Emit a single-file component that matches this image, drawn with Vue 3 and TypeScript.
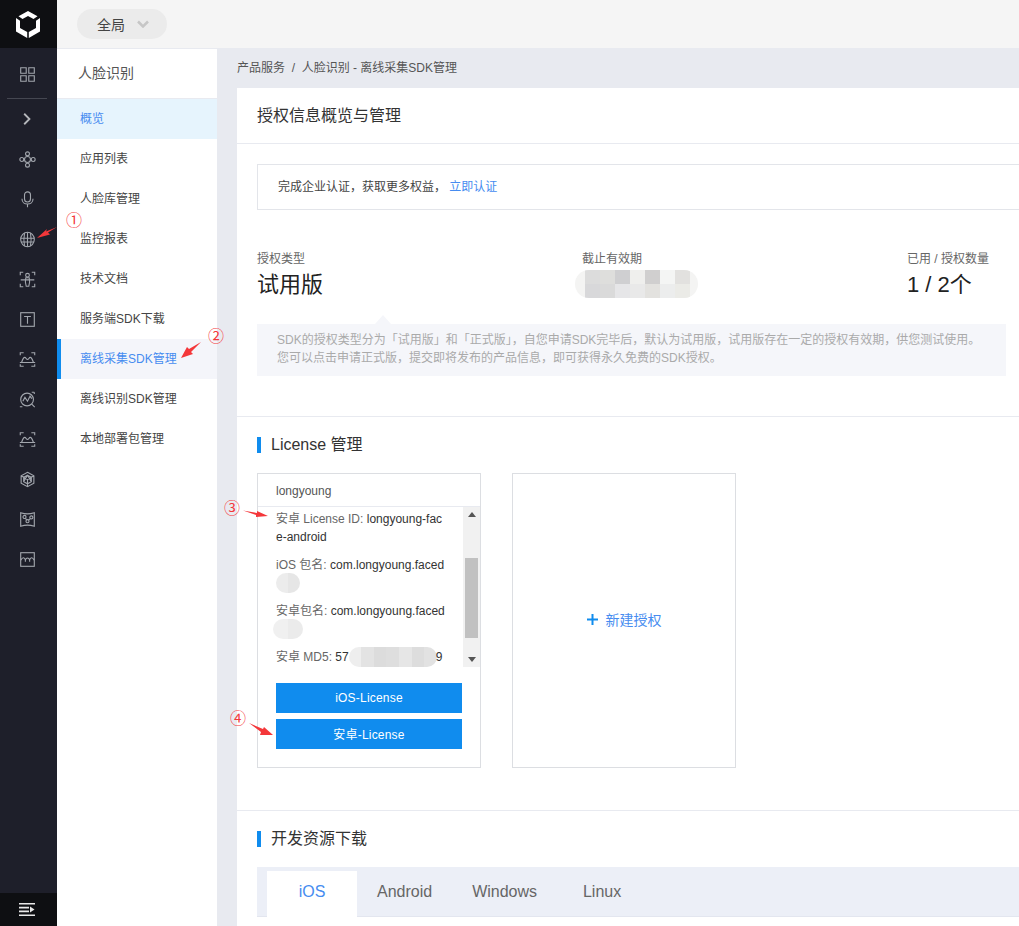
<script setup lang="ts">
const menu = ['概览', '应用列表', '人脸库管理', '监控报表', '技术文档', '服务端SDK下载', '离线采集SDK管理', '离线识别SDK管理', '本地部署包管理']
const tabs = ['iOS', 'Android', 'Windows', 'Linux']

const dateBlur = ['#dcdcdc', '#dededc', '#cfcfd1', '#efefed', '#d0cfcf', '#f4f5f4', '#e2e1df', '#d8d8da', '#dadada', '#e6e6e8', '#e9e9e9', '#e3e2df', '#eceded', '#ebebe7']
const md5Blur = ['#eeeeee', '#e3e3e3', '#dcdcdc', '#dedede', '#e6e6e6', '#dddddd', '#e2e2e2']
</script>

<template>
  <div class="page">
    <aside class="rail">
      <div class="logo">
        <svg width="24" height="27" viewBox="0 0 24 27">
          <path d="M12 0 21.500 5.200 17.500 8 12 5 6.500 8 2.500 5.200z" fill="#fff" />
          <path d="M0 7 4 9.800V17L11.200 21V27L0 20.500z" fill="#fff" />
          <path d="M24 7 20 9.800V17L12.800 21V27L24 20.500z" fill="#fff" />
        </svg>
      </div>
      <div class="rail-list">
        <span class="rail-icon">
          <svg viewBox="0 0 20 20"><path d="M2 2h6.500v6.500H2zM11.500 2H18v6.500h-6.500zM2 11.500h6.500V18H2zM11.500 11.500H18V18h-6.500z" /></svg>
        </span>
        <div class="rail-line"></div>
        <span class="rail-icon chevron">
          <svg viewBox="0 0 20 20"><path d="M6 2.500 13.500 10 6 17.500" /></svg>
        </span>
        <span class="rail-icon">
          <svg viewBox="0 0 20 20"><circle cx="10" cy="10" r="3.500" /><circle cx="10" cy="3.300" r="2.300" /><circle cx="10" cy="16.700" r="2.300" /><circle cx="3.300" cy="10" r="2.300" /><circle cx="16.700" cy="10" r="2.300" /></svg>
        </span>
        <span class="rail-icon">
          <svg viewBox="0 0 20 20"><rect x="6.500" y="1" width="7" height="12" rx="3.500" /><path d="M3.500 9c0 8.500 13 8.500 13 0M10 15.500V19" /></svg>
        </span>
        <span class="rail-icon">
          <svg viewBox="0 0 20 20"><ellipse cx="10" cy="10" rx="8" ry="8.500" /><path d="M2 8.500h16M2.500 13h15M10 1.500v17M6.500 2.500c-1 5-1 10 0 15M13.500 2.500c1 5 1 10 0 15" /></svg>
        </span>
        <span class="rail-icon">
          <svg viewBox="0 0 20 20"><path d="M1.500 5V1.500H5M15 1.500h3.500V5M1.500 15v3.500H5M15 18.500h3.500V15" /><circle cx="10" cy="5" r="2.200" /><path d="M8 8h4l.5 5-1 5h-3l-1-5zM2 10.500h16" /></svg>
        </span>
        <span class="rail-icon">
          <svg viewBox="0 0 20 20"><rect x="2" y="2" width="16" height="16" /><path d="M6 6.500h8M10 6.500V15" /></svg>
        </span>
        <span class="rail-icon">
          <svg viewBox="0 0 20 20"><path d="M1.500 5V2h4M14.500 2h4v3M1.500 15.500V18h4M14.500 18h4v-2.500M1 13.500h18M3 13.500c1-3 2-6 3.800-6 1.500 0 1.700 2.500 3.200 2.500s1.700-2.500 3.200-2.500c1.800 0 2.800 3 3.800 6" /></svg>
        </span>
        <span class="rail-icon">
          <svg viewBox="0 0 20 20"><circle cx="9.500" cy="10" r="7.500" /><path d="M4.500 12 7 7.500l3 4.500 3-6 2 3M15 15.500 18.500 19M15 1.500h3M18 1.500v2M1 18.500h3" /></svg>
        </span>
        <span class="rail-icon">
          <svg viewBox="0 0 20 20"><path d="M1.500 5V2h4M14.500 2h4v3M1.500 15.500V18h4M14.500 18h4v-2.500M1 13.500h18M3 13.500c1-3 2-6 3.800-6 1.500 0 1.700 2.500 3.200 2.500s1.700-2.500 3.200-2.500c1.800 0 2.800 3 3.800 6" /></svg>
        </span>
        <span class="rail-icon">
          <svg viewBox="0 0 20 20"><path d="M10 1.500l7.500 4.200v8.600L10 18.500l-7.500-4.200V5.700zM10 5l4.500 2.500v5L10 15l-4.500-2.500v-5zM2.500 5.700 10 10l7.500-4.300M10 10v8.500M5.500 12.500 10 5l4.500 7.500" /></svg>
        </span>
        <span class="rail-icon">
          <svg viewBox="0 0 20 20"><path d="M2 2c5 1.700 11 1.700 16 0v16c-5-1.700-11-1.700-16 0z" /><circle cx="6.500" cy="7" r="1.800" /><circle cx="10" cy="12" r="1.800" /><circle cx="14.500" cy="7.500" r="1.800" /><path d="M7.500 8.500 9 10.500M11.200 10.700 13.400 9" /></svg>
        </span>
        <span class="rail-icon">
          <svg viewBox="0 0 20 20"><rect x="2" y="2" width="16" height="16" /><path d="M2 11c2.200-4 4.500-4 5.500-.5 1-3 4-3 5 0 1-3.500 3.300-3.500 5.500.5M7.500 10.500v2M12.500 10.500v2" /></svg>
        </span>
      </div>
      <div class="rail-foot">
        <svg width="16" height="13" viewBox="0 0 16 13">
          <path d="M0 0h16v1.600H0zM0 3.800h10v1.600H0zM0 7.600h10v1.600H0zM0 11.400h16V13H0z" fill="#e8e8e8" />
          <path d="M11 3.400 15.500 6.500 11 9.600z" fill="#e8e8e8" />
        </svg>
      </div>
    </aside>

    <div class="right">
      <header class="topbar">
        <div class="scope">
          <span>全局</span>
          <svg width="12" height="8" viewBox="0 0 12 8"><path d="M1 1.500 6 6.500 11 1.500" /></svg>
        </div>
      </header>

      <div class="body">
        <nav class="side">
          <div class="side-title">人脸识别</div>
          <a
            v-for="(item, i) in menu"
            :key="item"
            class="side-item"
            :class="{ first: i === 0, active: i === 6 }"
          >{{ item }}</a>
        </nav>

        <main class="main">
          <div class="crumb">产品服务 &nbsp;/&nbsp; 人脸识别 - 离线采集SDK管理</div>
          <div class="card">
            <div class="card-head">授权信息概览与管理</div>

            <section class="overview">
              <div class="notice">完成企业认证，获取更多权益， <a class="link">立即认证</a></div>
              <div class="stats">
                <div class="stat">
                  <div class="stat-label">授权类型</div>
                  <div class="stat-value">试用版</div>
                </div>
                <div class="stat">
                  <div class="stat-label">截止有效期</div>
                  <div class="date-blur">
                    <i v-for="(c, i) in dateBlur" :key="i" :style="{ background: c }"></i>
                  </div>
                </div>
                <div class="stat">
                  <div class="stat-label">已用 / 授权数量</div>
                  <div class="stat-value">1 / 2个</div>
                </div>
              </div>
              <div class="tip">
                <p>SDK的授权类型分为「试用版」和「正式版」，自您申请SDK完毕后，默认为试用版，试用版存在一定的授权有效期，供您测试使用。</p>
                <p>您可以点击申请正式版，提交即将发布的产品信息，即可获得永久免费的SDK授权。</p>
              </div>
            </section>

            <section class="license">
              <h3 class="section-title">License 管理</h3>
              <div class="license-row">
                <div class="lic-card">
                  <div class="lic-name">longyoung</div>
                  <div class="lic-scroll">
                    <div class="lic-text">
                      <p><span class="key">安卓 License ID:</span> longyoung-fac<br />e-android</p>
                      <p><span class="key">iOS 包名:</span> com.longyoung.faced<br /><span class="smudge s1"></span></p>
                      <p><span class="key">安卓包名:</span> com.longyoung.faced<br /><span class="smudge s2"></span></p>
                      <p class="md5"><span class="key">安卓 MD5:</span>&nbsp;57<span class="md5-blur"><i v-for="(c, i) in md5Blur" :key="i" :style="{ background: c }"></i></span>9</p>
                    </div>
                    <div class="bar">
                      <span class="arrow up"></span>
                      <div class="bar-track"><div class="thumb"></div></div>
                      <span class="arrow down"></span>
                    </div>
                  </div>
                  <div class="lic-buttons">
                    <button type="button" class="btn">iOS-License</button>
                    <button type="button" class="btn cn">安卓-License</button>
                  </div>
                </div>
                <div class="new-card">
                  <svg width="11" height="11" viewBox="0 0 11 11"><path d="M0 4.500h11v2H0zM4.500 0h2v11h-2z" /></svg>
                  <span>新建授权</span>
                </div>
              </div>
            </section>

            <section class="download">
              <h3 class="section-title">开发资源下载</h3>
              <div class="tabs">
                <div v-for="(t, i) in tabs" :key="t" class="tab" :class="{ on: i === 0 }">{{ t }}</div>
              </div>
            </section>
          </div>
        </main>
      </div>
    </div>

    <!-- red annotations drawn over the screenshot -->
    <svg class="marks" width="1019" height="926" viewBox="0 0 1019 926">
      <path d="M57 227 46 231.500 47 229 37 238 50 234.500 48 232.500z" />
      <path d="M201 342 189 349 187 347 181 358 193 354 191 352z" />
      <path d="M243 510.500 257 513 257 511 268 516 256 517 256 515z" />
      <path d="M249 723 263 729 264 727 273 735 260 735 261 732z" />
    </svg>
    <span class="num n1">①</span>
    <span class="num n2">②</span>
    <span class="num n3">③</span>
    <span class="num n4">④</span>
  </div>
</template>

<style scoped>
.page {
  position: relative;
  display: flex;
  width: 1019px;
  height: 926px;
  overflow: hidden;
  font-family: "Liberation Sans", "Noto Sans CJK SC", sans-serif;
  font-size: 12px;
  color: #333;
}

.rail {
  display: flex;
  flex-direction: column;
  flex: none;
  width: 57px;
  background: #1e1f2a;
}
.logo {
  display: flex;
  align-items: center;
  justify-content: center;
  height: 48px;
  padding-right: 1px;
  box-sizing: border-box;
  background: #0e0f12;
}
.rail-list {
  flex: 1;
  display: flex;
  flex-direction: column;
  align-items: center;
  padding: 6px 3px 0 0;
}
.rail-icon {
  display: flex;
  align-items: center;
  justify-content: center;
  height: 40px;
  width: 100%;
}
.rail-icon svg {
  width: 17px;
  height: 17px;
  fill: none;
  stroke: #a2a6ad;
  stroke-width: 1.300;
}
.rail-icon.chevron svg {
  width: 14px;
  height: 14px;
  stroke: #b5b7bb;
  stroke-width: 2.600;
}
.rail-line {
  width: 40px;
  height: 1px;
  margin-top: 4px;
  background: #454751;
}
.rail-foot {
  display: flex;
  align-items: center;
  justify-content: center;
  height: 33px;
  padding: 0 3px 0 0;
  box-sizing: border-box;
  background: #0e0f12;
}

.right {
  flex: 1;
  display: flex;
  flex-direction: column;
  min-width: 0;
}
.topbar {
  display: flex;
  align-items: center;
  flex: none;
  height: 49px;
  padding: 0 0 1px 20px;
  background: #f5f5f5;
  border-bottom: 1px solid #e8eaf0;
  box-sizing: border-box;
}
.scope {
  display: flex;
  align-items: center;
  gap: 12px;
  width: 90px;
  height: 30px;
  padding-left: 20px;
  box-sizing: border-box;
  border-radius: 15px;
  background: #ebebeb;
  font-size: 14px;
  color: #444;
}
.scope svg {
  fill: none;
  stroke: #c6c6c6;
  stroke-width: 2.500;
}

.body {
  flex: 1;
  display: flex;
  min-height: 0;
}
.side {
  flex: none;
  width: 160px;
  background: #fff;
}
.side-title {
  height: 50px;
  line-height: 49px;
  padding-left: 21px;
  box-sizing: border-box;
  border-bottom: 1px solid #e8eaf0;
  font-size: 14px;
  color: #555;
}
.side-item {
  display: block;
  height: 40px;
  line-height: 40px;
  padding-left: 23px;
  color: #444;
}
.side-item.first {
  background: #e6f4fd;
  color: #468cf0;
}
.side-item.active {
  padding-left: 19px;
  border-left: 4px solid #108cee;
  background: #f4f5fa;
  color: #468cf0;
}

.main {
  flex: 1;
  display: flex;
  flex-direction: column;
  min-width: 0;
  padding-left: 20px;
  background: #e8eaf0;
  overflow: hidden;
}
.crumb {
  flex: none;
  height: 39px;
  line-height: 39px;
  color: #555;
}
.card {
  flex: 1;
  width: 800px;
  background: #fff;
}
.card-head {
  height: 56px;
  line-height: 55px;
  padding-left: 20px;
  box-sizing: border-box;
  border-bottom: 1px solid #e8eaf0;
  font-size: 16px;
  color: #333;
}
.overview {
  height: 273px;
  padding: 20px 0 0 20px;
  box-sizing: border-box;
  border-bottom: 1px solid #e8eaf0;
}
.notice {
  height: 46px;
  line-height: 44px;
  padding-left: 20px;
  box-sizing: border-box;
  border: 1px solid #e3e5ea;
  color: #444;
}
.link {
  color: #468cf0;
}
.stats {
  display: grid;
  grid-template-columns: repeat(3, 325px);
  margin-top: 41px;
  height: 73px;
}
.stat-label {
  line-height: 16px;
  color: #666;
}
.stat-value {
  margin-top: 1px;
  line-height: 34px;
  font-size: 22px;
  color: #222;
}
.date-blur {
  display: grid;
  grid-template-columns: repeat(7, 15px);
  grid-auto-rows: 14px;
  width: 105px;
  margin: 3px 0 0 -7px;
  padding: 0 8px 0 10px;
  background: #f4f4f3;
  border-radius: 14px;
  overflow: hidden;
}
.tip {
  position: relative;
  width: 749px;
  height: 52px;
  padding: 7px 0 0 20px;
  box-sizing: border-box;
  background: #f5f6fa;
  color: #aaa;
  line-height: 18px;
}
.tip::before {
  content: "";
  position: absolute;
  left: 118px;
  top: -9px;
  border-left: 8px solid transparent;
  border-right: 8px solid transparent;
  border-bottom: 9px solid #f5f6fa;
}
.tip p {
  margin: 0;
  white-space: nowrap;
}

.license {
  height: 394px;
  padding: 20px 0 0 20px;
  box-sizing: border-box;
  border-bottom: 1px solid #e8eaf0;
}
.section-title {
  height: 16px;
  margin: 0;
  padding-left: 10px;
  border-left: 4px solid #108cee;
  line-height: 16px;
  font-size: 16px;
  font-weight: 400;
  color: #333;
}
.license-row {
  display: flex;
  gap: 31px;
  margin-top: 20px;
}
.lic-card {
  width: 224px;
  height: 295px;
  box-sizing: border-box;
  border: 1px solid #dcdee2;
}
.lic-name {
  height: 32px;
  line-height: 34px;
  padding-left: 18px;
  border-bottom: 1px solid #e8eaf0;
  color: #555;
}
.lic-scroll {
  display: flex;
  height: 160px;
  justify-content: space-between;
}
.lic-text {
  width: 180px;
  padding: 3px 0 0 18px;
  line-height: 18px;
  color: #333;
  overflow: hidden;
}
.lic-text p {
  margin: 0 0 10px;
  white-space: nowrap;
}
.key {
  color: #666;
}
.smudge {
  display: block;
  height: 20px;
  margin: -1px 0;
  background: linear-gradient(90deg, #ececec 50%, #e6e6e6 50%);
  border-radius: 10px;
}
.s1 {
  width: 24px;
}
.s2 {
  width: 30px;
  margin-left: -3px;
  background: linear-gradient(90deg, #f0f0f0 50%, #ebebeb 50%);
}
.md5 {
  display: flex;
}
.md5-blur {
  display: inline-flex;
  width: 88px;
  height: 20px;
  margin: -1px -1px 0 0;
  border-radius: 10px;
  overflow: hidden;
}
.md5-blur i {
  flex: 1;
}
.bar {
  display: flex;
  flex-direction: column;
  flex: none;
  width: 17px;
  background: #f1f1f1;
}
.arrow {
  flex: none;
  align-self: center;
  width: 0;
  height: 0;
  margin: 5px 0;
  border-left: 4px solid transparent;
  border-right: 4px solid transparent;
}
.arrow.up {
  border-bottom: 5px solid #555;
}
.arrow.down {
  border-top: 5px solid #555;
}
.bar-track {
  flex: 1;
  padding-top: 36px;
}
.thumb {
  width: 13px;
  height: 80px;
  margin: 0 auto;
  background: #c1c1c1;
}
.lic-buttons {
  display: flex;
  flex-direction: column;
  gap: 6px;
  padding: 16px 18px 0;
}
.btn {
  height: 30px;
  padding: 0;
  border: 0;
  background: #108cee;
  color: #fff;
  font: inherit;
  letter-spacing: 0.2px;
}
.btn.cn {
  padding-bottom: 2px;
}
.new-card {
  display: flex;
  align-items: center;
  justify-content: center;
  gap: 8px;
  width: 224px;
  height: 295px;
  padding-bottom: 3px;
  box-sizing: border-box;
  border: 1px solid #dcdee2;
  color: #468cf0;
  font-size: 14px;
}
.new-card svg {
  fill: #108cee;
}

.download {
  padding: 20px 0 0 20px;
}
.tabs {
  display: flex;
  width: 780px;
  height: 50px;
  margin-top: 20px;
  padding: 4px 0 0 10px;
  box-sizing: border-box;
  background: #eceff7;
  border-bottom: 1px solid #e3e6ef;
}
.tab {
  min-width: 90px;
  padding: 0 20px;
  box-sizing: border-box;
  line-height: 41px;
  font-size: 16px;
  text-align: center;
  color: #666;
}
.tab.on {
  height: 46px;
  background: #fff;
  color: #468cf0;
}

.marks {
  position: absolute;
  left: 0;
  top: 0;
  pointer-events: none;
}
.marks path {
  fill: #f4373a;
}
.num {
  position: absolute;
  font-family: "Noto Sans CJK SC", sans-serif;
  font-size: 16px;
  line-height: 18px;
  color: #f4373a;
}
.n1 { left: 66px; top: 210px; }
.n2 { left: 208px; top: 326px; }
.n3 { left: 224px; top: 498px; }
.n4 { left: 230px; top: 708px; }
</style>

<style>
html, body {
  margin: 0;
  background: #fff;
}
</style>
